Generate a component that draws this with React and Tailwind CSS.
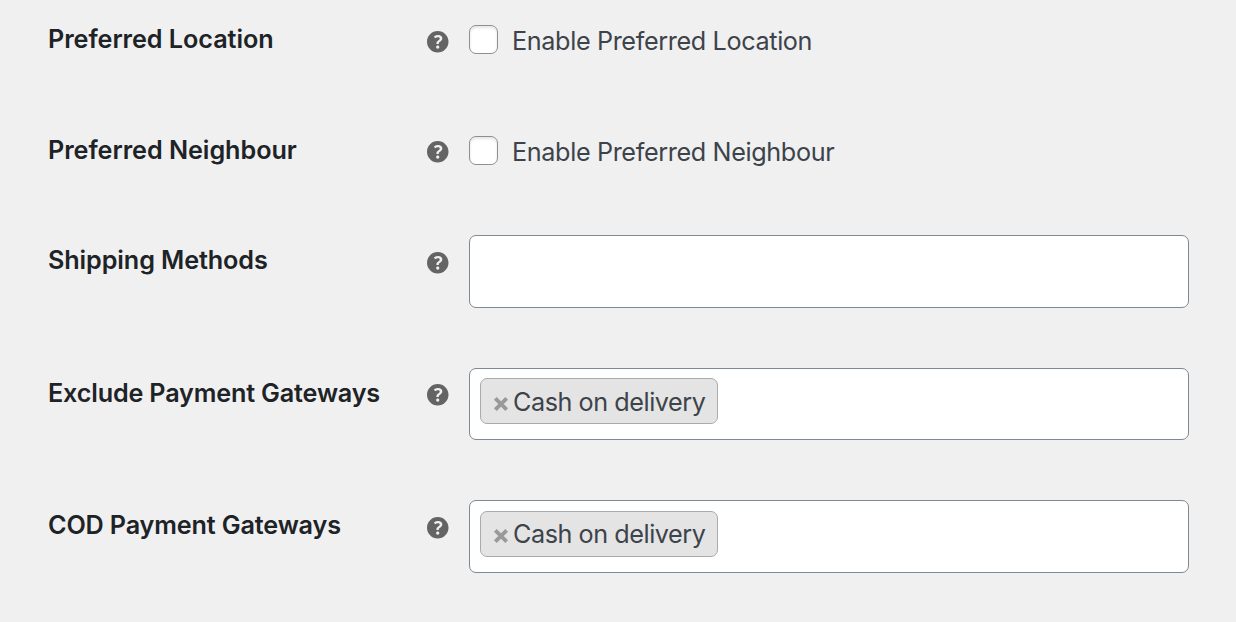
function Help() {
  return (
    <svg viewBox="3 3 14 14" className="size-[21.5px] shrink-0 text-[#646464]" fill="currentColor">
      <path d="M17 10c0-3.87-3.14-7-7-7-3.87 0-7 3.13-7 7s3.13 7 7 7c3.86 0 7-3.13 7-7zm-6.3 1.48H9.14v-.43c0-.38.08-.7.24-.98s.46-.57.88-.89c.41-.29.68-.53.81-.71.14-.18.2-.39.2-.62 0-.25-.09-.44-.28-.58-.19-.13-.45-.19-.79-.19-.58 0-1.25.19-2 .57l-.64-1.28c.87-.49 1.8-.74 2.77-.74.81 0 1.45.2 1.92.58.48.39.71.91.71 1.55 0 .43-.09.8-.29 1.11-.19.32-.57.67-1.11 1.06-.38.28-.61.49-.71.63-.1.15-.15.34-.15.57v.35zm-1.47 2.74c-.18-.17-.27-.42-.27-.73 0-.33.08-.58.26-.75s.43-.25.77-.25c.32 0 .57.09.75.26s.27.42.27.74c0 .3-.09.55-.27.72-.18.18-.43.27-.75.27-.33 0-.58-.09-.76-.26z" />
    </svg>
  );
}

function Row({ label, height, helpTop, labelTop, tracking = "tracking-[-0.1px]", children }) {
  return (
    <div className={`flex items-start ${height}`}>
      <div className={`w-[379px] shrink-0 ${labelTop} ${tracking} whitespace-nowrap text-[25.2px] leading-8 font-semibold text-[#1d2327]`}>{label}</div>
      <div className={`w-[42px] shrink-0 ${helpTop}`}><Help /></div>
      {children}
    </div>
  );
}

function Check({ label }) {
  return (
    <label className="flex items-start pt-[25px]">
      <span className="size-[29px] rounded-[7px] border border-[#8c8f94] bg-white shadow-[inset_0_2px_3px_rgba(0,0,0,0.1)]" />
      <span className="ml-3.5 whitespace-nowrap text-[25.2px] leading-8 tracking-[-0.36px] text-[#3c434a]">{label}</span>
    </label>
  );
}

function Box({ value, height, pad = "pt-[9px]", tagPad = "pt-[7px]" }) {
  return (
    <div className={`w-[720px] ${height} ${pad} rounded-[7px] border border-[#7e8993] bg-white px-[10px]`}>
      {value && (
        <span className={`flex h-[46px] w-[238px] items-start rounded-[7px] border border-[#aaa] bg-[#e4e4e4] pl-3 ${tagPad} text-[25.2px] leading-8 text-[#3c434a]`}>
          <svg viewBox="0 0 16 16" className="mt-[9.5px] mr-1 size-4 shrink-0 text-[#999]" fill="none" stroke="currentColor" strokeWidth="3.8">
            <path d="M2.3 2.3l11.4 11.4M13.7 2.3l-11.4 11.4" />
          </svg>
          <span className="whitespace-nowrap tracking-[-0.45px]">{value}</span>
        </span>
      )}
    </div>
  );
}

export default function App() {
  return (
    <main className="h-[622px] overflow-hidden bg-[#f0f0f0] pl-12 font-['Inter',sans-serif]">
      <Row label="Preferred Location" height="h-[111px]" labelTop="pt-[23px]" helpTop="pt-[31px]" tracking="tracking-[-0.05px]"><Check label="Enable Preferred Location" /></Row>
      <Row label="Preferred Neighbour" height="h-[124px]" labelTop="pt-[23px]" helpTop="pt-[30px]" tracking="tracking-[-0.04px]"><Check label="Enable Preferred Neighbour" /></Row>
      <Row label="Shipping Methods" height="h-[133px]" labelTop="pt-[9px]" helpTop="pt-[17px]"><Box height="h-[73px]" /></Row>
      <Row label="Exclude Payment Gateways" height="h-[132px]" labelTop="pt-[9px]" helpTop="pt-4" tracking="tracking-[-0.17px]"><Box height="h-[72px]" value="Cash on delivery" /></Row>
      <Row label="COD Payment Gateways" height="h-[122px]" labelTop="pt-[9px]" helpTop="pt-[17px]" tracking="tracking-[-0.15px]"><Box height="h-[73px]" pad="pt-[10px]" tagPad="pt-1.5" value="Cash on delivery" /></Row>
    </main>
  );
}
